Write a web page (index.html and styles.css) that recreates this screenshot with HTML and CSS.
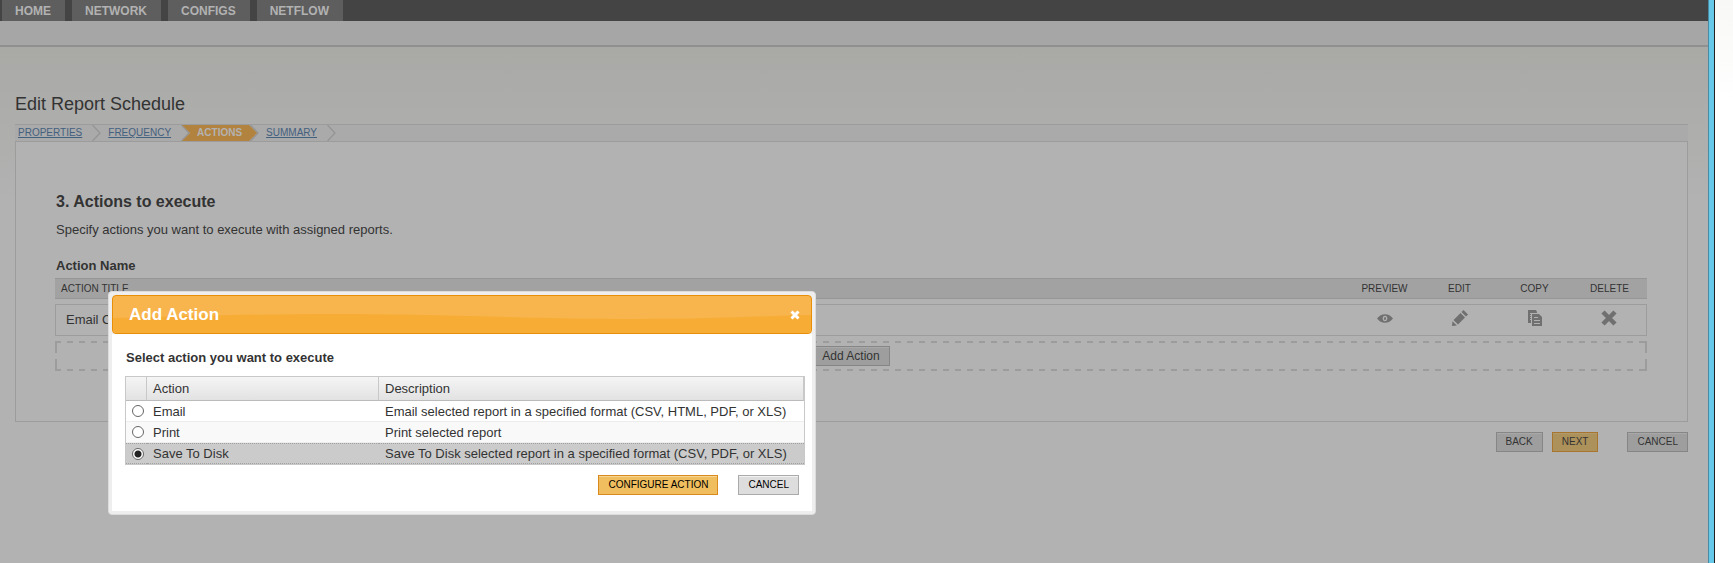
FILE: index.html
```
<!DOCTYPE html>
<html lang="en">
<head>
    <meta charset="UTF-8">
    <meta name="viewport" content="width=device-width, initial-scale=1.0">
    <title>Edit Report Schedule</title>
    <link rel="stylesheet" href="styles.css">
</head>
<body>
    <div class="app">
        <nav class="main-nav">
            <a href="#">HOME</a>
            <a href="#">NETWORK</a>
            <a href="#">CONFIGS</a>
            <a href="#">NETFLOW</a>
        </nav>
        <div class="sub-nav"></div>

        <main class="content">
            <h1>Edit Report Schedule</h1>

            <div class="wizard">
                <a class="step" href="#">PROPERTIES</a>
                <svg class="chevron" width="9" height="16" viewBox="0 0 9 16"><path d="M0.5 0L8 8L0.5 16" fill="none" stroke="#949494" stroke-width="1.2"/></svg>
                <a class="step" href="#">FREQUENCY</a>
                <svg class="chevron" width="9" height="16" viewBox="0 0 9 16"><path d="M0.5 0L8 8L0.5 16" fill="none" stroke="#949494" stroke-width="1.2"/></svg>
                <span class="step-active">ACTIONS</span>
                <svg class="chevron after-active" width="9" height="16" viewBox="0 0 9 16"><path d="M0.5 0L8 8L0.5 16" fill="none" stroke="#949494" stroke-width="1.2"/></svg>
                <a class="step" href="#">SUMMARY</a>
                <svg class="chevron" width="9" height="16" viewBox="0 0 9 16"><path d="M0.5 0L8 8L0.5 16" fill="none" stroke="#949494" stroke-width="1.2"/></svg>
            </div>

            <section class="panel">
                <h2>3. Actions to execute</h2>
                <p>Specify actions you want to execute with assigned reports.</p>
                <h3>Action Name</h3>

                <table class="actions">
                    <thead>
                        <tr>
                            <th class="title">ACTION TITLE</th>
                            <th>PREVIEW</th>
                            <th>EDIT</th>
                            <th>COPY</th>
                            <th>DELETE</th>
                        </tr>
                    </thead>
                    <tbody>
                        <tr>
                            <td class="title">Email C</td>
                            <td>
                                <button class="icon" aria-label="Preview">
                                    <svg width="16" height="16" viewBox="0 0 16 16"><path d="M0 8.5C4 2.8 12 2.8 16 8.5C12 14.2 4 14.2 0 8.5Z" fill="#707070"/><ellipse cx="8" cy="8.5" rx="2.3" ry="2.8" fill="#b0b0b0"/><ellipse cx="8" cy="8.5" rx="1" ry="1.6" fill="#707070"/></svg>
                                </button>
                            </td>
                            <td>
                                <button class="icon" aria-label="Edit">
                                    <svg width="16" height="16" viewBox="0 0 16 16"><path d="M11.5 0L16 4.5L14 6.5L9.5 2ZM8.5 3L13 7.5L6 14.5L1.5 10ZM0.5 11.2L4.8 15.5L0 16Z" fill="#707070"/></svg>
                                </button>
                            </td>
                            <td>
                                <button class="icon" aria-label="Copy">
                                    <svg width="16" height="16" viewBox="0 0 16 16"><path d="M1 0H9L10 2V3H4V13H1Z" fill="#707070"/><path d="M5 4H12L15 7V16H5Z" fill="#707070"/><path d="M3 3.5H4M3 5.5H4M3 7.5H4M3 9.5H4M7 7.5H11M7 10.5H13M7 13.5H13" stroke="#b0b0b0"/></svg>
                                </button>
                            </td>
                            <td>
                                <button class="icon" aria-label="Delete">
                                    <svg width="16" height="16" viewBox="0 0 16 16"><path d="M2 2L14 14M14 2L2 14" stroke="#707070" stroke-width="4.5"/></svg>
                                </button>
                            </td>
                        </tr>
                    </tbody>
                </table>
                <div class="add-row">
                    <button class="btn btn-add">Add Action</button>
                </div>
            </section>

            <div class="wizard-buttons">
                <button class="btn">BACK</button>
                <button class="btn btn-next">NEXT</button>
                <button class="btn btn-leave">CANCEL</button>
            </div>
        </main>
    </div>
    <div class="window-edge"></div>
    <div class="outside"></div>

    <div class="dialog" role="dialog" aria-labelledby="dialog-title">
        <div class="dialog-header">
            <svg class="wave" viewBox="0 0 700 37" preserveAspectRatio="none"><path d="M0 22C80 20 140 18 220 18C340 18 420 23 525 23C600 23 650 20 700 19V37H0Z" fill="#f7ac35"/></svg>
            <h2 id="dialog-title">Add Action</h2>
            <button class="close" aria-label="Close">
                <svg width="10" height="10" viewBox="0 0 10 10"><path d="M1.5 1.5L8.5 8.5M8.5 1.5L1.5 8.5" stroke="#fff" stroke-width="3"/></svg>
            </button>
        </div>
        <div class="dialog-body">
            <h3>Select action you want to execute</h3>
            <table class="grid">
                <thead>
                    <tr>
                        <th class="pick"></th>
                        <th class="name">Action</th>
                        <th>Description</th>
                    </tr>
                </thead>
                <tbody>
                    <tr>
                        <td class="pick"><input type="radio" name="action" id="email"></td>
                        <td><label for="email">Email</label></td>
                        <td>Email selected report in a specified format (CSV, HTML, PDF, or XLS)</td>
                    </tr>
                    <tr class="alt">
                        <td class="pick"><input type="radio" name="action" id="print"></td>
                        <td><label for="print">Print</label></td>
                        <td>Print selected report</td>
                    </tr>
                    <tr class="selected">
                        <td class="pick"><input type="radio" name="action" id="disk" checked></td>
                        <td><label for="disk">Save To Disk</label></td>
                        <td>Save To Disk selected report in a specified format (CSV, PDF, or XLS)</td>
                    </tr>
                </tbody>
            </table>
            <div class="dialog-buttons">
                <button class="btn btn-light btn-primary">CONFIGURE ACTION</button>
                <button class="btn btn-light">CANCEL</button>
            </div>
        </div>
    </div>
</body>
</html>
```
FILE: styles.css
```
* {
    box-sizing: border-box;
}
body {
    margin: 0;
    min-height: 100vh;
    display: flex;
    font-family: Arial, "Liberation Sans", sans-serif;
    font-size: 13px;
    color: #333;
    background: #fff;
}
h1, h2, h3, p {
    margin: 0;
}
.app {
    flex: 1;
    background: linear-gradient(#a9a9a6 48px, #b2b2b2 200px);
}
.window-edge {
    flex: none;
    width: 7px;
    background: #66c9ea;
    border-left: 1px solid #458ca4;
    border-right: 1px solid #222;
}
.outside {
    flex: none;
    width: 18px;
    background: linear-gradient(#f8f8f6, #fff 100px);
}

/* navigation */
.main-nav {
    display: flex;
    gap: 7px;
    height: 21px;
    padding-left: 2px;
    background: #444;
}
.main-nav a {
    padding: 0 14px 0 13px;
    line-height: 22px;
    font-size: 12px;
    font-weight: bold;
    color: #b2b2b2;
    background: #5e5e5e;
    text-decoration: none;
}
.sub-nav {
    height: 26px;
    background: #a6a6a6;
    border-bottom: 2px solid #909090;
}

/* page content */
.content {
    padding: 46px 20px 20px 15px;
}
h1 {
    font-size: 18px;
    line-height: 22px;
    font-weight: normal;
}
.wizard {
    display: flex;
    height: 17px;
    margin-top: 9px;
    padding-left: 3px;
    border-top: 1px solid #9c9c9c;
    background: #aaa;
    font-size: 10px;
    line-height: 16px;
}
.step {
    color: #44607f;
}
.chevron {
    margin: 0 7px 0 10px;
}
.step-active {
    height: 16px;
    padding: 0 15px;
    margin-left: -15px;
    font-weight: bold;
    color: #b2b2b2;
    background: #b2823f;
    clip-path: polygon(0 0, calc(100% - 8px) 0, 100% 50%, calc(100% - 8px) 100%, 0 100%, 8px 50%);
}
.after-active {
    margin-left: -7px;
}
.panel {
    padding: 50px 40px 50px 39px;
    border: 1px solid #9c9c9c;
    background: #b2b2b2;
}
.panel h2 {
    padding-left: 1px;
    font-size: 16px;
    line-height: 20px;
}
.panel p {
    margin-top: 10px;
    padding-left: 1px;
    line-height: 16px;
}
.panel h3 {
    margin-top: 20px;
    padding-left: 1px;
    font-size: 13px;
    line-height: 15px;
}
.actions {
    width: 100%;
    border-collapse: separate;
    border-spacing: 0 5px;
    table-layout: fixed;
}
.actions th {
    width: 75px;
    height: 21px;
    padding: 0;
    font-size: 10px;
    font-weight: normal;
    background: #a2a2a2;
    border-top: 1px solid #969696;
    border-bottom: 1px solid #969696;
}
.actions td {
    height: 32px;
    padding: 0 0 4px;
    text-align: center;
    border-top: 1px solid #9c9c9c;
    border-bottom: 1px solid #9c9c9c;
}
.actions td:last-child {
    border-right: 1px solid #9c9c9c;
}
.actions .title {
    width: auto;
    text-align: left;
}
.actions th.title {
    padding-left: 6px;
}
.actions td.title {
    padding: 0 0 2px 10px;
    border-left: 1px solid #9c9c9c;
}
.icon {
    display: inline-block;
    padding: 0;
    border: 0;
    background: none;
    vertical-align: middle;
}
.icon svg {
    display: block;
}
.add-row {
    display: flex;
    justify-content: center;
    padding: 5px 0;
    background:
        repeating-linear-gradient(90deg, #9c9c9c 0 6px, transparent 6px 12px) top / 100% 2px no-repeat,
        repeating-linear-gradient(90deg, #9c9c9c 0 6px, transparent 6px 12px) bottom / 100% 2px no-repeat,
        repeating-linear-gradient(#9c9c9c 0 12px, transparent 12px 18px) left / 2px 100% no-repeat,
        repeating-linear-gradient(#9c9c9c 0 12px, transparent 12px 18px) right / 2px 100% no-repeat;
}

/* buttons */
.btn {
    height: 20px;
    padding: 0 9px;
    font-family: inherit;
    font-size: 10px;
    line-height: 16px;
    color: #333;
    background: #9e9e9e;
    border: 1px solid #868686;
    box-shadow: inset 0 1px #a8a8a8;
}
.btn-add {
    font-size: 12px;
}
.btn-next {
    background: #ad915a;
    border-color: #a8752e;
    box-shadow: inset 0 1px #b09a6c;
}
.btn-leave {
    margin-left: 20px;
}
.wizard-buttons {
    display: flex;
    justify-content: flex-end;
    gap: 9px;
    margin-top: 10px;
}
.btn-light {
    color: #000;
    background: #ddd;
    border-color: #aaa;
    box-shadow: inset 0 1px #f2f2f2;
}
.btn-primary {
    background: #f0be5e;
    border-color: #d98a1e;
    box-shadow: inset 0 1px #f6d592;
}

/* dialog */
.dialog {
    position: absolute;
    top: 291px;
    left: 108px;
    width: 708px;
    padding: 3px;
    border: 1px solid #dcdcdc;
    border-radius: 4px;
    background: #eee;
}
.dialog-header {
    position: relative;
    display: flex;
    align-items: center;
    justify-content: space-between;
    height: 39px;
    padding: 0 11px 0 16px;
    overflow: hidden;
    border: 1px solid #e78f08;
    border-radius: 4px;
    background: #f8b54d;
}
.wave {
    position: absolute;
    top: 0;
    left: 0;
    width: 100%;
    height: 100%;
}
.dialog-header h2 {
    position: relative;
    font-size: 17px;
    color: #fff;
}
.close {
    position: relative;
    padding: 0;
    border: 0;
    background: none;
}
.close svg {
    display: block;
}
.dialog-body {
    padding: 15px 7px 16px 13px;
    background: #fff;
}
.dialog-body h3 {
    padding-left: 1px;
    font-size: 13px;
    line-height: 18px;
}
.grid {
    width: 100%;
    margin-top: 9px;
    border: 1px solid #c8c8c8;
    border-spacing: 0;
    table-layout: fixed;
    line-height: 19px;
}
.grid th {
    height: 24px;
    padding: 0 6px;
    font-weight: normal;
    text-align: left;
    background: linear-gradient(#f5f5f5, #e2e2e2);
    border-right: 1px solid #c8c8c8;
    border-bottom: 1px solid #bbb;
}
.grid td {
    height: 21px;
    padding: 0 6px;
    border-bottom: 1px solid #ededed;
}
.grid .name {
    width: 232px;
}
.grid .pick {
    width: 21px;
    padding: 0 0 0 6px;
}
.grid input {
    appearance: none;
    display: block;
    width: 12px;
    height: 12px;
    margin: 0;
    border: 1px solid #666;
    border-radius: 50%;
    background: #fff;
}
.grid input:checked {
    background: radial-gradient(#222 0 3px, #fff 4px);
}
.grid .alt td {
    background: #f9f9f9;
}
.grid .selected td {
    background: #cbcbcb;
    border-top: 1px dotted #a0a0a0;
    border-bottom: 1px dotted #a0a0a0;
}
.dialog-buttons {
    display: flex;
    justify-content: flex-end;
    gap: 20px;
    margin-top: 10px;
    padding-right: 6px;
}
```
